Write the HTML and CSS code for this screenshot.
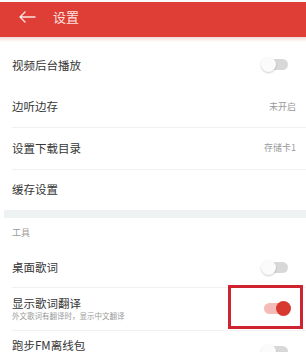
FILE: index.html
```html
<!DOCTYPE html>
<html>
<head>
  <title>设置</title>
  <meta charset="UTF-8">
  <link rel="stylesheet" href="styles.css">
</head>
<body>
  <div class="screen">
    <div class="status-strip"></div>
    <div class="appbar">
      <svg class="back" width="18" height="12" viewBox="0 0 18 12">
        <path d="M17 6H2M7 1L2 6l5 5" fill="none" stroke="currentColor" stroke-width="1.4" stroke-linecap="round" stroke-linejoin="round"/>
      </svg>
      <span class="appbar-title">设置</span>
    </div>

    <div class="list first">
      <div class="row no-line">
        <span class="row-title">视频后台播放</span>
        <span class="switch"><span class="knob"></span></span>
      </div>
      <div class="row no-line">
        <span class="row-title">边听边存</span>
        <span class="row-value">未开启</span>
      </div>
      <div class="row">
        <span class="row-title">设置下载目录</span>
        <span class="row-value">存储卡1</span>
      </div>
      <div class="row">
        <span class="row-title">缓存设置</span>
      </div>
    </div>

    <div class="band"></div>
    <div class="group-label">工具</div>

    <div class="list">
      <div class="row row-short">
        <span class="row-title">桌面歌词</span>
        <span class="switch"><span class="knob"></span></span>
      </div>
      <div class="row row-tall">
        <div class="row-text">
          <div class="row-title">显示歌词翻译</div>
          <div class="row-sub">外文歌词有翻译时，显示中文翻译</div>
        </div>
        <span class="switch on"><span class="knob"></span></span>
        <div class="mark"></div>
      </div>
      <div class="row row-tall">
        <div class="row-text pushed">
          <div class="row-title">跑步FM离线包</div>
        </div>
        <span class="switch"><span class="knob"></span></span>
      </div>
    </div>
  </div>
</body>
</html>
```

FILE: styles.css
```css
:root {
  --red: #df3e37;
  --text: #363636;
  --muted: #9a9a9a;
  --line: #f1f1f1;
}
body {
  margin: 0;
  width: 306px;
  height: 352px;
  overflow: hidden;
  background: #fff;
  font-family: "Noto Sans CJK SC", "Noto Sans", sans-serif;
  color: var(--text);
}
.screen { position: relative; }
.status-strip { height: 2px; background: #fafafa; }
.appbar { height: 35px; background: var(--red); color: #fbe2df; display: flex; align-items: flex-start; padding-top: 9px; box-sizing: border-box; position: relative; }
.appbar::after { content: ''; position: absolute; left: 0; right: 0; top: 35px; height: 5px; background: linear-gradient(#f2d9d5, #fff); }
.back { margin: 0 0 0 18px; color: #fbe2df; }
.appbar-title { font-size: 13px; line-height: 15px; margin-left: 17px; margin-top: -2px; }

.list.first { padding-top: 7px; }
.row { height: 41.5px; display: flex; align-items: center; justify-content: space-between; padding: 0 10px 0 12px; box-sizing: border-box; position: relative; }
.row + .row::before { content: ''; position: absolute; left: 12px; right: 0; top: 0; height: 1px; background: var(--line); }
.row.no-line::before { display: none; }
.row-short { height: 40px; }
.row-tall { height: 43px; }
.row-title { font-size: 11.5px; line-height: 14px; }
.row-value { font-size: 9px; color: var(--muted); }
.row-sub { font-size: 7.5px; line-height: 10px; color: var(--muted); margin-top: 1px; }
.row-text.pushed { padding-bottom: 13px; }

.band { height: 8px; background: #eef2f2; margin-left: 4px; }
.group-label { height: 29px; display: flex; align-items: center; padding-left: 12px; font-size: 9px; color: var(--muted); }

.switch { position: relative; width: 30px; height: 15px; margin-right: 5px; flex: none; }
.switch::before { content: ''; position: absolute; left: 3px; right: 3px; top: 2px; height: 11px; border-radius: 6px; background: #d8d8d8; }
.switch .knob { position: absolute; left: 0; top: 0; width: 15px; height: 15px; border-radius: 50%; background: #fbfbfb; box-shadow: 0 1px 2px rgba(0, 0, 0, 0.2); }
.switch.on::before { background: #f5bcb7; }
.switch.on .knob { left: auto; right: 0; background: #d7392f; box-shadow: none; }

.mark { position: absolute; left: 228px; top: -2px; width: 75px; height: 44px; border: 3px solid #cf2330; box-sizing: border-box; }
```
